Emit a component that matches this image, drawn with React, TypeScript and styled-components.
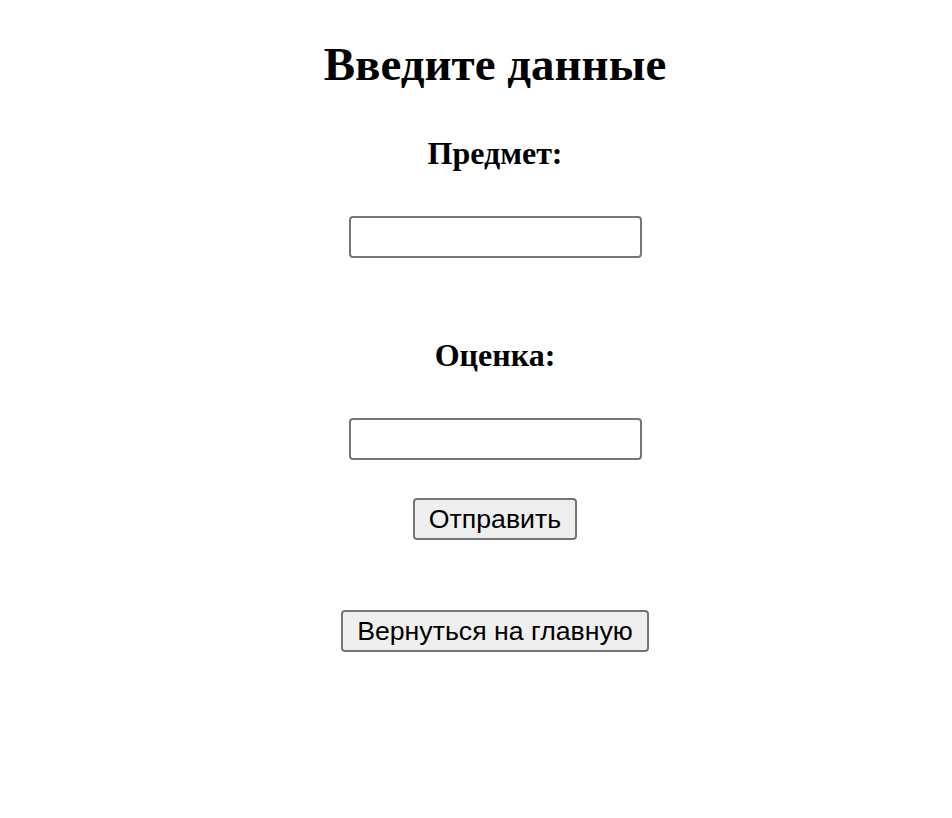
import React from "react";
import styled, { createGlobalStyle } from "styled-components";

const Global = createGlobalStyle`
  html, body { margin: 0; padding: 0; background: #fff; }
  body { font-family: "Liberation Serif", serif; color: #000; }
`;

const Page = styled.div`
  display: flex;
  flex-direction: column;
  align-items: center;
  padding: 37px 0 0 38px;
`;

const Title = styled.h1`
  margin: 0;
  font-family: "Liberation Serif", serif;
  font-size: 47px;
  font-weight: bold;
  line-height: 55px;
`;

const Form = styled.form`
  display: flex;
  flex-direction: column;
  align-items: center;
`;

const Label = styled.label<{ $top: number }>`
  display: block;
  margin-top: ${(p) => p.$top}px;
  font-family: "Liberation Serif", serif;
  font-size: 32px;
  font-weight: bold;
  line-height: 37px;
`;

const Input = styled.input`
  box-sizing: border-box;
  width: 293px;
  height: 42px;
  margin-top: 44px;
  border: 2px solid #767676;
  border-radius: 4px;
  background: #fff;
  font-size: 26px;
  padding: 2px 6px;
`;

const Button = styled.button<{ $top: number }>`
  box-sizing: border-box;
  height: 42px;
  margin-top: ${(p) => p.$top}px;
  padding: 0 14px;
  background: #efefef;
  border: 2px solid #767676;
  border-radius: 4px;
  font-family: "Liberation Sans", Arial, sans-serif;
  font-size: 26.7px;
  line-height: 30px;
  color: #000;
`;

export default function App() {
  return (
    <>
      <Global />
      <Page>
        <Title>Введите данные</Title>
        <Form onSubmit={(e) => e.preventDefault()}>
          <Label $top={43}>Предмет:</Label>
          <Input type="text" />
          <Label $top={79}>Оценка:</Label>
          <Input type="text" />
          <Button type="submit" $top={38}>Отправить</Button>
        </Form>
        <Button type="button" $top={70}>Вернуться на главную</Button>
      </Page>
    </>
  );
}
